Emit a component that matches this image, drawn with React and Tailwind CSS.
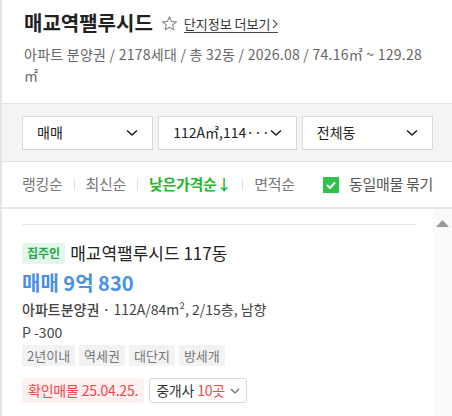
import React from "react";

const Chevron = ({ className = "" }) => (
  <svg width="12" height="8" viewBox="0 0 12 8" className={className}>
    <path d="M1 1.5 L6 6 L11 1.5" fill="none" stroke="#222" strokeWidth="1.6" />
  </svg>
);

function Select({ label }) {
  return (
    <div className="flex-1 h-[34px] bg-white border border-[#d8d8d8] flex items-center justify-between pl-[14px] pr-[14px] text-[14px] text-[#222]">
      <span className="whitespace-nowrap">{label}</span>
      <Chevron />
    </div>
  );
}

export default function App() {
  const font = { fontFamily: '"Noto Sans CJK KR", "Noto Sans", sans-serif' };
  return (
    <div className="w-[452px] h-[416px] overflow-hidden bg-white border-l-2 border-[#e4e4e4] flex flex-col" style={font}>
      {/* Header */}
      <div className="h-[104px] pl-[22px] pr-[8px] pt-[7px] border-b border-[#e4e4e4] shrink-0">
        <div className="flex items-center h-[32px]">
          <span className="text-[20px] font-bold text-[#222]">매교역팰루시드</span>
          <svg width="17" height="17" viewBox="0 0 24 24" className="ml-[8px] mt-[1px]">
            <path d="M12 2.5 L14.8 9 L21.8 9.5 L16.4 14 L18.1 21 L12 17.2 L5.9 21 L7.6 14 L2.2 9.5 L9.2 9 Z" fill="none" stroke="#888" strokeWidth="1.5" strokeLinejoin="round" />
          </svg>
          <span className="ml-[6px] text-[13px] text-[#333] border-b border-[#444] leading-[16px] mt-[3px] flex items-center">
            단지정보 더보기
            <svg width="6" height="10" viewBox="0 0 6 10" className="ml-[2px]">
              <path d="M1 1 L5 5 L1 9" fill="none" stroke="#555" strokeWidth="1.1" />
            </svg>
          </span>
        </div>
        <div className="text-[14px] text-[#666] leading-[21px] mt-[5px] tracking-[0.25px]">
          아파트 분양권 / 2178세대 / 총 32동 / 2026.08 / 74.16㎡ ~ 129.28
          <br />㎡
        </div>
      </div>
      {/* Filters */}
      <div className="h-[58px] bg-[#f4f4f4] border-b border-[#e0e0e0] flex items-center gap-[5px] pl-[20px] pr-[19px] shrink-0">
        <Select label="매매" />
        <Select label="112A㎡,114···" />
        <Select label="전체동" />
      </div>
      {/* Sort row */}
      <div className="h-[47px] border-b-2 border-[#e6e6e6] flex items-center pl-[20px] pr-[19px] text-[15px] tracking-[-0.3px] shrink-0">
        <span className="text-[#777]">랭킹순</span>
        <span className="mx-[11px] w-px h-[11px] bg-[#ddd]" />
        <span className="text-[#777]">최신순</span>
        <span className="mx-[11px] w-px h-[11px] bg-[#ddd]" />
        <span className="text-[#1fb82e] font-bold">낮은가격순↓</span>
        <span className="mx-[11px] w-px h-[11px] bg-[#ddd]" />
        <span className="text-[#777]">면적순</span>
        <div className="ml-auto flex items-center gap-[10px]">
          <span className="w-[16px] h-[16px] bg-[#2fc14a] flex items-center justify-center">
            <svg width="10" height="8" viewBox="0 0 10 8">
              <path d="M1 4 L4 7 L9 1.5" fill="none" stroke="white" strokeWidth="2" />
            </svg>
          </span>
          <span className="text-[#555]">동일매물 묶기</span>
        </div>
      </div>
      {/* List */}
      <div className="flex flex-1">
        <div className="flex-1 pl-[20px] pr-[17px]">
          <div className="mt-[15px] h-px bg-[#e6e6e6]" />
          <div className="flex items-center mt-[17px] h-[22px]">
            <span className="h-[21px] px-[5px] rounded-[3px] bg-[#e3f7ea] text-[#20a847] text-[12px] font-bold flex items-center">집주인</span>
            <span className="ml-[5px] text-[17px] text-[#222]">매교역팰루시드 117동</span>
          </div>
          <div className="mt-[6px] text-[20px] font-bold text-[#4a90e2] leading-[26px]">매매 9억 830</div>
          <div className="mt-[2px] text-[14px] text-[#444] leading-[22px]">
            <span className="font-medium">아파트분양권</span> · 112A/84m², 2/15층, 남향
          </div>
          <div className="text-[14px] text-[#444] leading-[22px] mt-[1px]">P -300</div>
          <div className="flex gap-[4px] mt-[2px]">
            {["2년이내", "역세권", "대단지", "방세개"].map((t) => (
              <span key={t} className="h-[21px] px-[5px] bg-[#f2f2f2] text-[#777] text-[13px] flex items-center">{t}</span>
            ))}
          </div>
          <div className="flex gap-[5px] mt-[12px]">
            <span className="h-[25px] px-[6px] rounded-[3px] bg-[#fff0f0] text-[#f04646] text-[14px] tracking-[-0.2px] flex items-center">확인매물 25.04.25.</span>
            <span className="h-[25px] px-[6px] rounded-[3px] border border-[#d8d8d8] text-[#333] text-[14px] tracking-[-0.2px] flex items-center">
              중개사&nbsp;<span className="text-[#f04646]">10곳</span>
              <svg width="10" height="6" viewBox="0 0 10 6" className="ml-[5px]">
                <path d="M1 1 L5 5 L9 1" fill="none" stroke="#666" strokeWidth="1.2" />
              </svg>
            </span>
          </div>
        </div>
        <div className="w-[19px] bg-[#fafafa] flex justify-center pt-[11px]">
          <svg width="13" height="7" viewBox="0 0 13 7">
            <path d="M0 7 L6.5 0 L13 7 Z" fill="#999" />
          </svg>
        </div>
      </div>
    </div>
  );
}
